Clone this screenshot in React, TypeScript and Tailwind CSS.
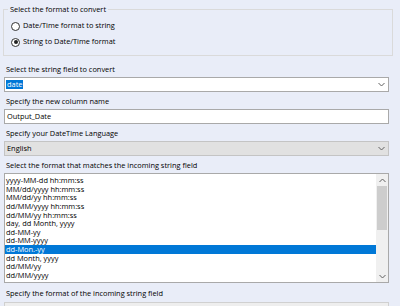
const formats = [
  'yyyy-MM-dd hh:mm:ss',
  'MM/dd/yyyy hh:mm:ss',
  'MM/dd/yy hh:mm:ss',
  'dd/MM/yyyy hh:mm:ss',
  'dd/MM/yy hh:mm:ss',
  'day, dd Month, yyyy',
  'dd-MM-yy',
  'dd-MM-yyyy',
  'dd-Mon.-yy',
  'dd Month, yyyy',
  'dd/MM/yy',
  'dd/MM/yyyy',
];

const selected = 'dd-Mon.-yy';

function Chevron({ up = false }: { up?: boolean }) {
  return (
    <svg width="7" height="5" viewBox="0 0 7 5" className={up ? 'rotate-180' : ''}>
      <path d="M0.5 1 L3.5 4 L6.5 1" fill="none" stroke="#606060" strokeWidth="1" />
    </svg>
  );
}

function Radio({ checked, label }: { checked: boolean; label: string }) {
  return (
    <div className="flex items-center h-[16px] ml-[3px]">
      <span className="w-[9px] h-[9px] rounded-full border border-[#333333] bg-white flex items-center justify-center">
        {checked && <span className="w-[4px] h-[4px] rounded-full bg-[#222222]" />}
      </span>
      <span className="ml-[3px]">{label}</span>
    </div>
  );
}

function Label({ text, first = false }: { text: string; first?: boolean }) {
  return (
    <div className={`${first ? 'pt-[8px] h-[21px]' : 'pt-[4px] h-[17px]'} pl-[2px] leading-[11px]`}>
      {text}
    </div>
  );
}

export default function App() {
  return (
    <div
      className="w-[400px] h-[306px] overflow-hidden bg-[#e9edf8] text-black font-medium text-[7.4px]"
      style={{ fontFamily: '"Open Sans", "Noto Sans", sans-serif' }}
    >
      <fieldset className="mx-[3px] mt-[4px] w-[390px] h-[52px] border border-[#dadada] px-[4px] pt-[3px]">
        <legend className="px-[2px] leading-[11px]">Select the format to convert</legend>
        <Radio checked={false} label="Date/Time format to string" />
        <Radio checked label="String to Date/Time format" />
      </fieldset>

      <div className="px-[4px] w-[393px]">
        <Label first text="Select the string field to convert" />
        <div className="h-[15px] border border-[#a9a9a9] bg-white flex items-center pl-[1px] pr-[3px]">
          <span className="bg-[#0078d7] text-white leading-[9px] px-[1px]">date</span>
          <span className="flex-1" />
          <Chevron />
        </div>

        <Label text="Specify the new column name" />
        <div className="h-[15px] border border-[#a9a9a9] bg-white flex items-center pl-[2px]">
          Output_Date
        </div>

        <Label text="Specify your DateTime Language" />
        <div className="h-[15px] border border-[#c4c4c4] bg-[#e1e1e1] flex items-center pl-[2px] pr-[3px]">
          <span className="flex-1">English</span>
          <Chevron />
        </div>

        <Label text="Select the format that matches the incoming string field" />
        <div className="h-[110px] border border-[#a9a9a9] bg-white flex">
          <div className="flex-1 pt-[2px]">
            {formats.map((f) => (
              <div
                key={f}
                className={`h-[8.65px] leading-[8.65px] pl-[1px] ${
                  f === selected ? 'bg-[#0078d7] text-white' : ''
                }`}
              >
                {f}
              </div>
            ))}
          </div>
          <div className="w-[12px] bg-[#f0f0f0] flex flex-col items-center">
            <div className="h-[12px] flex items-center justify-center">
              <Chevron up />
            </div>
            <div className="w-[10px] h-[44px] bg-[#cdcdcd]" />
            <div className="flex-1" />
            <div className="h-[12px] flex items-center justify-center">
              <Chevron />
            </div>
          </div>
        </div>

        <div className="pt-[5px] h-[19px] pl-[2px] leading-[11px]">
          Specify the format of the incoming string field
        </div>
        <div className="h-[15px] border border-[#d0d0d0] bg-[#eeeeee]" />
      </div>
    </div>
  );
}
